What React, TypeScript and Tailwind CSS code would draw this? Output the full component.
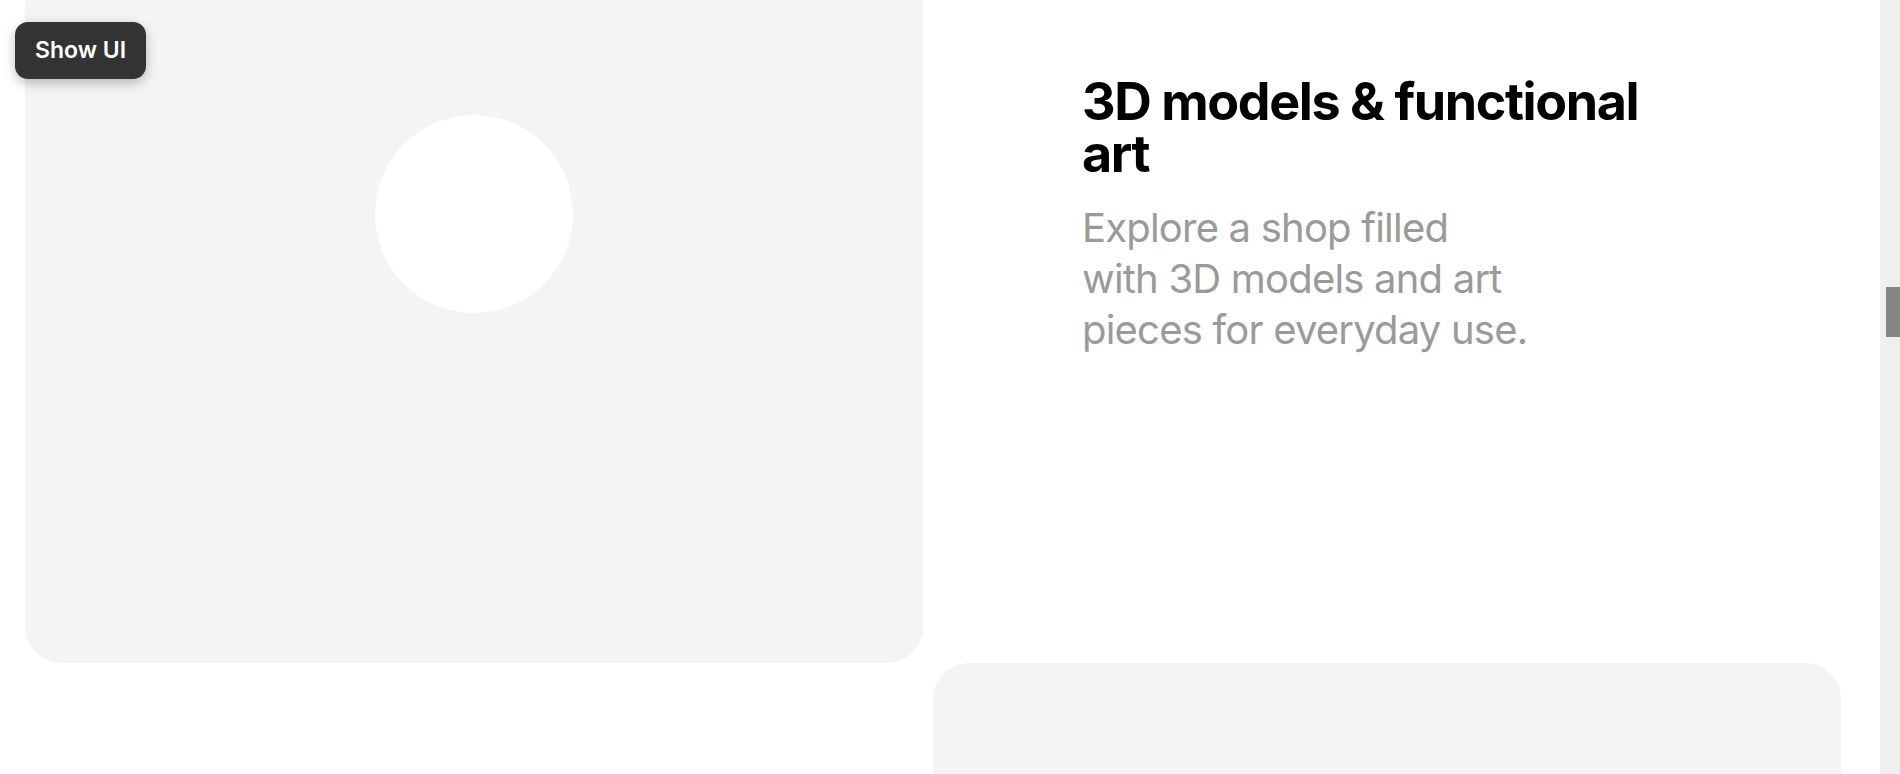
export default function App() {
  return (
    <div className="relative flex h-[774px] w-[1900px] overflow-hidden bg-white font-['Inter',sans-serif]">
      <main className="flex w-[1880px] flex-col">
        <section className="flex h-[663px] shrink-0">
          <div className="ml-[25px] flex h-full w-[898px] shrink-0 justify-center rounded-b-[36px] bg-[#f4f4f4]">
            <div className="mt-[115px] h-[198px] w-[198px] rounded-full bg-white" />
          </div>
          <div className="ml-[159px] pt-[76px]">
            <h2 className="text-[52px] font-bold leading-[52px] tracking-[-0.027em] text-black">
              3D models &amp; functional
              <br />
              art
            </h2>
            <p className="mt-[22px] text-[40px] leading-[51px] tracking-[-0.02em] text-[#9a9a9a]">
              Explore a shop filled
              <br />
              with 3D models and art
              <br />
              pieces for everyday use.
            </p>
          </div>
        </section>
        <section className="flex flex-1">
          <div className="ml-[933px] h-full w-[908px] rounded-t-[36px] bg-[#f4f4f4]" />
        </section>
      </main>
      <div className="flex w-[20px] shrink-0 justify-end bg-[#efefef]">
        <div className="mt-[287px] h-[50px] w-[14px] bg-[#858585]" />
      </div>
      <button className="absolute left-[15px] top-[22px] flex h-[57px] w-[131px] items-center justify-center rounded-[13px] bg-[#333333] text-[23px] font-semibold text-white shadow-[0_4px_12px_rgba(0,0,0,0.25)]">
        Show UI
      </button>
    </div>
  );
}
